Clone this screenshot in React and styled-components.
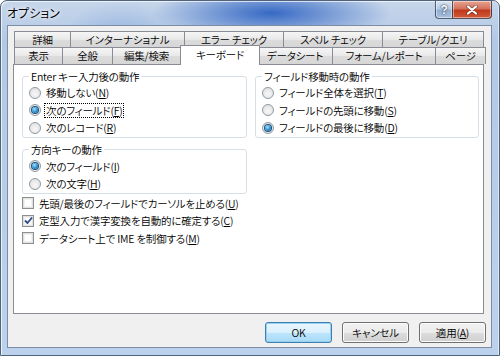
import React from 'react';
import styled, { createGlobalStyle, css } from 'styled-components';

const GlobalStyle = createGlobalStyle`
  html, body {
    margin: 0;
    padding: 0;
    background: #ffffff;
  }
  body {
    font-family: "Noto Sans CJK JP", "Liberation Sans", sans-serif;
    font-size: 10.5px;
    font-weight: 350;
    letter-spacing: -0.2px;
    color: #000;
    font-feature-settings: "palt" 1;
  }
  * { box-sizing: border-box; }
`;

const Window = styled.div`
  width: 500px;
  height: 356px;
  display: flex;
  flex-direction: column;
  border: 1px solid #50627c;
  border-radius: 7px 7px 0 0;
  overflow: hidden;
  background:
    radial-gradient(ellipse 120px 28px at 270px 12px, rgba(30, 86, 190, 0.85), rgba(30, 86, 190, 0) 100%),
    radial-gradient(ellipse 60px 40px at 120px 40px, rgba(80, 130, 210, 0.35), rgba(80, 130, 210, 0) 100%),
    linear-gradient(#c6d6ea, #b2c9e6 40px, #bcd2ec 100%);
  box-shadow: inset 1px 1px 0 rgba(255, 255, 255, 0.7), inset -1px 0 0 rgba(255, 255, 255, 0.5);
`;

const TitleBar = styled.div`
  height: 24px;
  flex: none;
  display: flex;
  align-items: flex-start;
  justify-content: space-between;
  padding: 0 7px 0 6px;
`;

const Title = styled.div`
  margin-top: 5px;
  font-size: 12px;
  font-weight: 400;
  letter-spacing: 0;
  line-height: 14px;
  color: #000;
  text-shadow: 0 0 6px #fff, 0 0 3px #fff;
`;

const Controls = styled.div`
  display: flex;
`;

const CaptionButton = styled.div`
  height: 18px;
  display: flex;
  align-items: center;
  justify-content: center;
  border: 1px solid rgba(40, 52, 74, 0.75);
  border-top: none;
  color: #fff;
  font-weight: bold;
  font-family: "Liberation Sans", sans-serif;
  font-size: 12px;
  text-shadow: 0 0 2px #233a5c, 0 0 1px #233a5c;
  box-shadow: inset 0 0 0 1px rgba(255, 255, 255, 0.45);
  ${p => p.$close ? css`
    width: 40px;
    border-radius: 0 0 4px 0;
    margin-left: -1px;
    background: linear-gradient(#e7a593, #d4715b 45%, #c0391c 55%, #d05a38);
  ` : css`
    width: 18px;
    border-radius: 0 0 0 4px;
    background: linear-gradient(#dbe5f1, #b9cbe2 45%, #93aed0 55%, #a9c1df);
  `}
`;

const Client = styled.div`
  flex: 1;
  margin: 0 7px 7px 6px;
  border: 1px solid #7d8ca2;
  background: #f0f0f0;
  display: flex;
  flex-direction: column;
  padding: 5px 0 0 5px;
`;

const TabRow = styled.div`
  display: flex;
  margin-left: 1px;
`;

const Tab = styled.div`
  height: ${p => (p.$top ? '16px' : '17px')};
  width: ${p => p.$w}px;
  flex: none;
  display: flex;
  align-items: center;
  justify-content: center;
  border: 1px solid #898c95;
  border-bottom: none;
  background: linear-gradient(#f6f6f6, #e8e8e8 50%, #dcdcdc 51%, #d6d6d6);
  white-space: nowrap;
  line-height: 14px;
  & + & { margin-left: -1px; }
  ${p => p.$active && css`
    position: relative;
    z-index: 1;
    height: 20px;
    margin-top: -2px;
    margin-bottom: -1px;
    margin-right: -2px;
    && { margin-left: -3px; }
    background: #ffffff;
    align-items: flex-start;
    padding-top: 2px;
  `}
`;

const Panel = styled.div`
  height: 250px;
  margin-right: 7px;
  background: #fff;
  border: 1px solid #898c95;
  padding: 5px 4px 0 8px;
  display: flex;
  flex-direction: column;
`;

const Columns = styled.div`
  display: grid;
  grid-template-columns: 225px 224px;
  column-gap: 8px;
  align-items: start;
`;

const Column = styled.div`
  display: flex;
  flex-direction: column;
  gap: 5px;
`;

const Group = styled.fieldset`
  margin: 0;
  border: 1px solid #d5dfe5;
  border-radius: 3px;
  padding: ${p => p.$pt}px 6px 0 6px;
  min-width: 0;
`;

const Legend = styled.legend`
  padding: 0 2px;
  margin-left: 0;
  line-height: 13px;
`;

const OptionRow = styled.div`
  height: 17.5px;
  display: flex;
  align-items: center;
  gap: 3px;
  white-space: nowrap;
`;

const RadioMark = styled.span`
  width: 12px;
  height: 12px;
  flex: none;
  border-radius: 50%;
  border: 1px solid #8f9aa4;
  background: radial-gradient(circle at 50% 60%, #f8f8f8, #dcdcdc);
  display: flex;
  align-items: center;
  justify-content: center;
  &::after {
    content: '';
    display: ${p => (p.$checked ? 'block' : 'none')};
    width: 6px;
    height: 6px;
    border-radius: 50%;
    background: radial-gradient(circle at 40% 35%, #a6e0fb, #2c8fd0 55%, #174f86);
    box-shadow: 0 0 0 1px #1d4f7d;
  }
`;

const CheckMark = styled.span`
  width: 12px;
  height: 12px;
  flex: none;
  border: 1px solid #8e8f8f;
  background: #fff;
  box-shadow: inset 0 0 0 1px #e2e2e2, inset 0 0 0 2px #f2f2f2;
  display: flex;
  align-items: center;
  justify-content: center;
`;

const Label = styled.span`
  line-height: 13px;
  padding: 0 1px;
  border: 1px dotted ${p => (p.$focused ? '#000' : 'transparent')};
`;

const CheckList = styled.div`
  margin-top: 1px;
  display: flex;
  flex-direction: column;
`;

const ButtonRow = styled.div`
  display: flex;
  justify-content: flex-end;
  gap: 10px;
  margin-top: 8px;
  padding-right: 5px;
`;

const Button = styled.div`
  width: 67px;
  height: 21px;
  display: flex;
  align-items: center;
  justify-content: center;
  border-radius: 3px;
  border: 1px solid ${p => (p.$default ? '#3c7fb1' : '#707070')};
  background: ${p => (p.$default
    ? 'linear-gradient(#eaf6fd, #d9f0fc 50%, #bee6fd 51%, #a7d9f5)'
    : 'linear-gradient(#f2f2f2, #ebebeb 50%, #dddddd 51%, #cfcfcf)')};
  box-shadow: inset 0 0 0 1px ${p => (p.$default ? '#98d1ef' : '#fcfcfc')};
  line-height: 13px;
`;

const topTabs = [
  ['詳細', 57], ['インターナショナル', 115], ['エラー チェック', 100], ['スペル チェック', 100], ['テーブル/クエリ', 102],
];

const bottomTabs = [
  ['表示', 49], ['全般', 51], ['編集/検索', 69], ['キーボード', 80, true], ['データシート', 76], ['フォーム/レポート', 104], ['ページ', 51],
];

const enterOptions = [
  { label: '移動しない', key: 'N' },
  { label: '次のフィールド', key: 'F', checked: true, focused: true },
  { label: '次のレコード', key: 'R' },
];

const arrowOptions = [
  { label: '次のフィールド', key: 'I', checked: true },
  { label: '次の文字', key: 'H' },
];

const fieldOptions = [
  { label: 'フィールド全体を選択', key: 'T' },
  { label: 'フィールドの先頭に移動', key: 'S' },
  { label: 'フィールドの最後に移動', key: 'D', checked: true },
];

const checks = [
  { label: '先頭/最後のフィールドでカーソルを止める', key: 'U' },
  { label: '定型入力で漢字変換を自動的に確定する', key: 'C', checked: true },
  { label: 'データシート上で IME を制御する', key: 'M' },
];

const Text = ({ item }) => (
  <Label $focused={item.focused}>
    {item.label}(<u>{item.key}</u>)
  </Label>
);

const RadioGroup = ({ title, options, pt }) => (
  <Group $pt={pt}>
    <Legend>{title}</Legend>
    {options.map(o => (
      <OptionRow key={o.key}>
        <RadioMark $checked={o.checked} />
        <Text item={o} />
      </OptionRow>
    ))}
  </Group>
);

const Tick = () => (
  <svg width="9" height="9" viewBox="0 0 9 9">
    <path d="M1 4.5 L3.5 7 L8 1.5" fill="none" stroke="#2d4a86" strokeWidth="1.8" strokeLinejoin="round" />
  </svg>
);

const CloseGlyph = () => (
  <svg width="12" height="10" viewBox="0 0 12 10">
    <path d="M2 1.5 L10 8.5 M10 1.5 L2 8.5" stroke="#3a2418" strokeWidth="3.6" strokeLinecap="round" opacity="0.55" />
    <path d="M2 1.5 L10 8.5 M10 1.5 L2 8.5" stroke="#fff" strokeWidth="2.2" strokeLinecap="round" />
  </svg>
);

export default function App() {
  return (
    <>
      <GlobalStyle />
      <Window>
        <TitleBar>
          <Title>オプション</Title>
          <Controls>
            <CaptionButton>?</CaptionButton>
            <CaptionButton $close><CloseGlyph /></CaptionButton>
          </Controls>
        </TitleBar>
        <Client>
          <TabRow>
            {topTabs.map(([t, w]) => <Tab key={t} $w={w} $top>{t}</Tab>)}
          </TabRow>
          <TabRow>
            {bottomTabs.map(([t, w, a]) => <Tab key={t} $w={w} $active={a}>{t}</Tab>)}
          </TabRow>
          <Panel>
            <Columns>
              <Column>
                <RadioGroup title="Enter キー入力後の動作" options={enterOptions} pt={1} />
                <RadioGroup title="方向キーの動作" options={arrowOptions} pt={2} />
              </Column>
              <Column>
                <RadioGroup title="フィールド移動時の動作" options={fieldOptions} pt={1} />
              </Column>
            </Columns>
            <CheckList>
              {checks.map(c => (
                <OptionRow key={c.key}>
                  <CheckMark>{c.checked && <Tick />}</CheckMark>
                  <Text item={c} />
                </OptionRow>
              ))}
            </CheckList>
          </Panel>
          <ButtonRow>
            <Button $default>OK</Button>
            <Button>キャンセル</Button>
            <Button>適用(<u>A</u>)</Button>
          </ButtonRow>
        </Client>
      </Window>
    </>
  );
}
